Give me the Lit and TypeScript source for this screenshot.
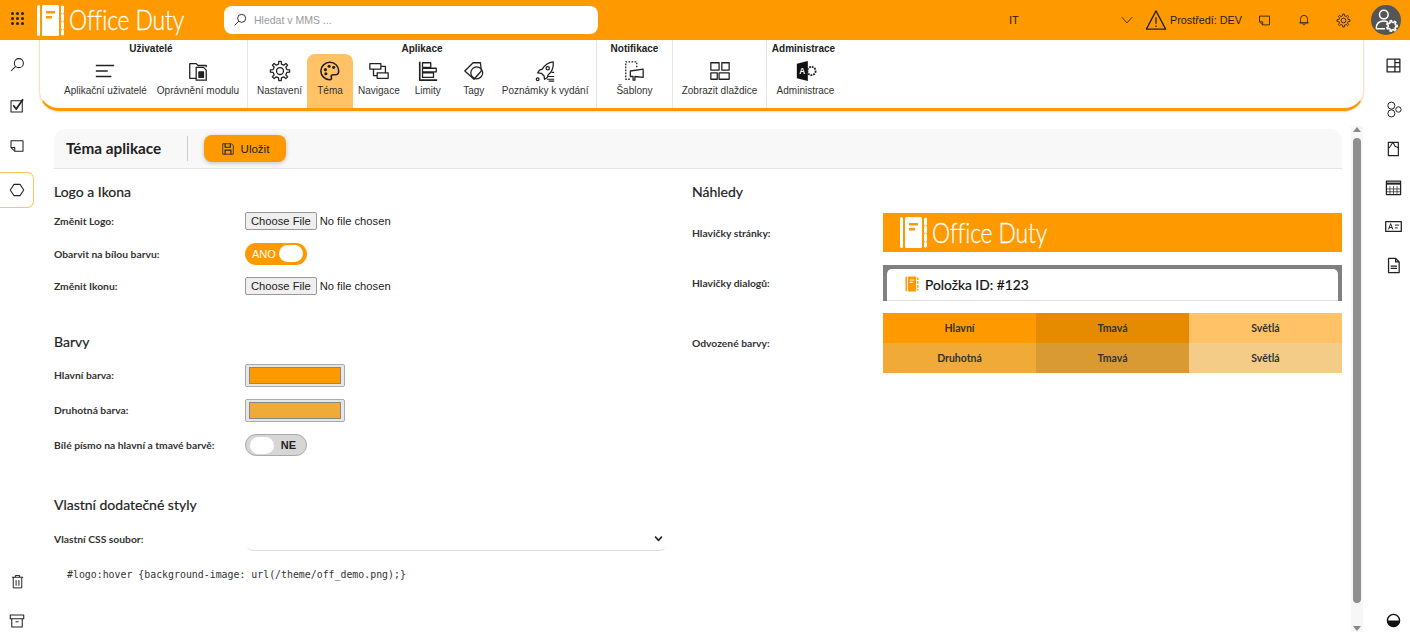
import { LitElement, html, css, svg } from 'lit';
import { customElement } from 'lit/decorators.js';
import { classMap } from 'lit/directives/class-map.js';

/** Ozubené kolo jako obrys, n zubů kolem středu 12,12. */
function gearPath(n: number, ro: number, ri: number): string {
  const step = (Math.PI * 2) / n;
  const pts: string[] = [];
  for (let i = 0; i < n; i++) {
    const a = i * step;
    const w = step * 0.2;
    const p = (r: number, t: number) =>
      `${(12 + r * Math.cos(t)).toFixed(2)} ${(12 + r * Math.sin(t)).toFixed(2)}`;
    pts.push(p(ri, a - w * 1.35), p(ro, a - w * 0.8), p(ro, a + w * 0.8), p(ri, a + w * 1.35));
  }
  return `M${pts.join('L')}Z`;
}

const ICONS: Record<string, unknown> = {
  search: svg`<circle cx="14.5" cy="9.5" r="6"/><path d="M10.2 13.8 4 20"/>`,
  check: svg`<path d="M4 5h15v15H4z"/><path d="M7 11l4 5 9-13" stroke-width="2.4"/>`,
  note: svg`<path d="M4 5h16v14H9l-5-5z"/><path d="M4 14h5v5"/>`,
  hexagon: svg`<path d="M8 4.5h8l5 7.5-5 7.5H8L3 12z"/>`,
  trash: svg`<path d="M4 6h16M9 6V3.500h6V6M6 6v15h12V6M10 10v8M14 10v8"/>`,
  archive: svg`<path d="M3 4h18v5H3zM5 9v11h14V9M10 13h4"/>`,
  lines: svg`<path d="M2 6h20M2 12h13M2 18h17"/>`,
  folderDoc: svg`<path d="M3 20V4h7l2 2h9v2M3 4v16h7"/><path d="M10 8h8l3 3v11H10z"/><path d="M13 13h5v6h-5z" fill="#222"/>`,
  gear: svg`<path d=${gearPath(8, 10.5, 7.6)}/><circle cx="12" cy="12" r="3.800"/>`,
  palette: svg`<path d="M12 2.500c-5.500 0-10 4.200-10 9.500s4.500 9.500 9.500 9.500c2 0 2.500-1.300 2-2.500-.7-1.700.3-3 2-3h2.500c2 0 3.500-1.500 3.500-4 0-5.500-4.500-9.500-9.500-9.500z" stroke-width="1.700"/><g fill="#222" stroke="none"><circle cx="7" cy="10.500" r="1.700"/><circle cx="11" cy="6.800" r="1.700"/><circle cx="16" cy="8" r="1.700"/><circle cx="7.500" cy="15" r="1.700"/></g>`,
  navigation: svg`<path d="M2 4h12v6H2zM10 14h12v6H10zM6 10v7h4M14 7h5v7"/>`,
  limits: svg`<path d="M3 2v20h19" stroke-width="1.800"/><path d="M6 3h9v5H6zM6 9h15v4H6zM6 14h12v5H6z"/>`,
  tags: svg`<path d="M2 12 11 3h8l1 9-8 9z"/><circle cx="15" cy="14" r="6.500"/>`,
  rocket: svg`<path d="M21 2c-5 .5-9 3-12 8l-3 1-2 3 4 .5 3 3 .5 3.500 3-2 1-3c4-3 6-8 5.500-14z"/><circle cx="15" cy="9" r="1.800"/><path d="M14 21h8M15 18h7M16 23h6M19 13.500h3" stroke-width="1.200"/><circle cx="4" cy="21" r="1.500"/>`,
  template: svg`<path d="M15 8V2H3v19h5" stroke-dasharray="1.800 1.500"/><path d="M8 12l14-2v9l-9-1v4h-2v-4H8z"/>`,
  tiles: svg`<path d="M2 3h9v8H2zM14 3h8v8h-8zM2 14h7v7H2zM11 14h11v7H11z"/>`,
  save: svg`<path d="M3 3h15l3 3v15H3z"/><path d="M7 3v6h9V3M7 21v-7h10v7" stroke-width="2"/>`,
  warning: svg`<path d="M12 2 1.500 22h21zM12 9v7M12 18v1.500"/>`,
  chevron: svg`<path d="m3 7 9 10 9-10"/>`,
  bell: svg`<path d="M6 17V10a6 6 0 0 1 12 0v7zM4 17h16M10 20h4"/>`,
  layout: svg`<path d="M3 3h18v18H3zM14 3v18M3 14h18M14 8h7" stroke-width="1.800"/>`,
  nodes: svg`<circle cx="9" cy="6.500" r="5"/><circle cx="9" cy="17.500" r="5"/><circle cx="19" cy="12" r="3.800"/>`,
  page: svg`<path d="M5 2h15v20H5z" stroke-width="1.800"/><path d="M5 11c3-1 4-6 7-9l3 6 5 2" stroke-width="1.600"/>`,
  calendar: svg`<path d="M2 3h20v19H2z" stroke-width="1.800"/><path d="M2 6.500h20" stroke-width="3"/><path d="M7 10v12M12 10v12M17 10v12M2 14h20M2 18h20" stroke-width="1"/>`,
  textbox: svg`<path d="M1 5h22v14H1z" stroke-width="1.800"/><path d="m5 16 3-8 3 8M6 13.500h4M14 10h6M14 14h4"/>`,
  doc: svg`<path d="M5 2h10l5 5v15H5zM15 2v5h5" stroke-width="1.800"/><path d="M8 13h9M8 16h9" stroke-width="1.800"/>`,
};

function icon(name: string, size = 22) {
  return html`<svg class="ic" width=${size} height=${size} viewBox="0 0 24 24">${ICONS[name]}</svg>`;
}

function logo() {
  return html`<div class="logo">
    <svg width="29" height="33" viewBox="0 0 29 33">
      <rect x="0" y="1" width="3" height="31" rx="1.500" fill="#fff" />
      <rect x="5" y="1" width="17" height="31" rx="1.500" fill="#fff" />
      <path d="M9 7h9v2.500H9zM9 12h6v2.500H9z" fill="#ff9900" />
      <path d="M25.500 3v5M25.500 11v5M25.500 19v5M25.500 27v3" stroke="#fff" stroke-width="3" stroke-linecap="round" />
    </svg>
    <span class="logo-text">Office Duty</span>
  </div>`;
}

const RIBBON = [
  { title: 'Uživatelé', cls: 'first', items: [['lines', 'Aplikační uživatelé'], ['folderDoc', 'Oprávnění modulu']] },
  {
    title: 'Aplikace',
    cls: '',
    items: [['gear', 'Nastavení'], ['palette', 'Téma'], ['navigation', 'Navigace'], ['limits', 'Limity'], ['tags', 'Tagy'], ['rocket', 'Poznámky k vydání']],
  },
  { title: 'Notifikace', cls: 'notif', items: [['template', 'Šablony']] },
  { title: '', cls: 'tiles', items: [['tiles', 'Zobrazit dlaždice']] },
  { title: 'Administrace', cls: 'admin', items: [['access', 'Administrace']] },
];

@customElement('app-root')
export class AppRoot extends LitElement {
  static styles = css`
    :host {
      display: block;
      width: 1410px;
      height: 640px;
      overflow: hidden;
      background: #fff;
      font-family: 'Liberation Sans', Arial, sans-serif;
      color: #222;
    }
    .ic {
      fill: none;
      stroke: #222;
      stroke-width: 1.4;
      stroke-linejoin: round;
      flex: none;
      display: block;
    }

    /* horní lišta */
    .topbar {
      height: 40px;
      background: #ff9900;
      display: flex;
      align-items: center;
      font-size: 10.800px;
    }
    .apps {
      display: grid;
      grid-template-columns: repeat(3, 3px);
      gap: 2px;
      margin: 0 13px 3px 11px;
    }
    .apps i {
      width: 3px;
      height: 3px;
      background: #222;
      border-radius: 50%;
    }
    .logo {
      display: flex;
      align-items: center;
      gap: 3px;
      color: #fff;
      width: 147px;
      flex: none;
    }
    .logo svg {
      flex: none;
    }
    .logo-text {
      font-family: Lato, sans-serif;
      font-weight: 300;
      font-size: 27px;
      letter-spacing: -0.2px;
      line-height: 32px;
      white-space: nowrap;
      transform: scaleX(0.85);
      transform-origin: left center;
      -webkit-text-stroke: 0.3px #fff;
    }
    .search {
      width: 374px;
      height: 28px;
      margin-left: 40px;
      margin-bottom: 1px;
      background: #fff;
      border-radius: 8px;
      display: flex;
      align-items: center;
      gap: 6px;
      padding-left: 8px;
      box-sizing: border-box;
      color: #9a9a9a;
      font-size: 10.500px;
    }
    .it {
      margin-left: 411px;
      width: 111px;
      font-size: 11px;
    }
    .warn-gap {
      width: 11px;
    }
    .env {
      margin: 0 15px 0 3px;
      white-space: nowrap;
    }
    .top-ic {
      margin-right: 25px;
    }
    .avatar {
      width: 30px;
      height: 30px;
      border-radius: 50%;
      background: #555;
      display: flex;
      align-items: center;
      justify-content: center;
      margin-left: -5px;
    }
    .avatar .ic {
      stroke: #fff;
    }

    /* tělo stránky */
    .body {
      display: grid;
      grid-template-columns: 39px 1325px 46px;
      height: 600px;
    }
    .rail {
      display: flex;
      flex-direction: column;
      align-items: center;
      height: 600px;
    }
    .rail.left {
      padding-right: 5px;
      padding-top: 5px;
      box-sizing: border-box;
    }
    .rail.right {
      padding: 5px 0 0 12px;
      box-sizing: border-box;
    }
    .rail-item {
      height: 40px;
      flex: none;
      display: flex;
      align-items: center;
      justify-content: center;
    }
    .rail.left .rail-item.second {
      height: 41px;
      padding-top: 1px;
      box-sizing: border-box;
    }
    .rail.right .rail-item {
      height: 39px;
    }
    .rail.right .rail-item.first {
      height: 45px;
      padding-bottom: 5px;
      box-sizing: border-box;
    }
    .rail-item.active {
      width: 37px;
      height: 36px;
      margin: 6px 0 0 -3px;
      padding-left: 3px;
      box-sizing: border-box;
      border: 1px solid #ffc266;
      border-left: none;
      border-radius: 0 7px 7px 0;
    }
    .rail-bottom {
      margin-top: auto;
    }
    .rail-last {
      margin-bottom: -1px;
    }

    /* ribbon */
    .ribbon {
      height: 71px;
      box-sizing: border-box;
      border: 1px solid #fde3b8;
      border-top: none;
      border-bottom: 3px solid #ff9900;
      border-radius: 0 0 20px 20px;
      box-shadow: 0 1px 2px rgba(0, 0, 0, 0.12);
      display: flex;
    }
    .group {
      display: flex;
      flex-direction: column;
      padding-top: 3px;
      border-right: 1px solid #e6e6e6;
      box-sizing: border-box;
    }
    .group-title {
      height: 11px;
      line-height: 11px;
      font-size: 10px;
      font-weight: 700;
      text-align: center;
      white-space: nowrap;
    }
    .group.first .group-title {
      padding-left: 15px;
    }
    .group.admin .group-title {
      padding-right: 4px;
    }
    .group-items {
      display: flex;
      flex: 1;
      justify-content: center;
    }
    .group.first {
      width: 208px;
    }
    .group.first .group-items {
      justify-content: flex-start;
      padding-left: 19px;
    }
    .group.apps-g {
      width: 349px;
    }
    .group.apps-g .group-items {
      justify-content: flex-start;
      padding-left: 4px;
    }
    .group.notif {
      width: 76px;
    }
    .group.tiles {
      width: 94px;
    }
    .group.admin {
      width: 77px;
      border-right: none;
    }
    .item {
      min-width: 46px;
      padding: 6px 5px 0;
      box-sizing: border-box;
      display: flex;
      flex-direction: column;
      align-items: center;
      font-size: 10px;
      color: #333;
      white-space: nowrap;
      gap: 3px;
    }
    .item.active {
      background: #ffc266;
      border-radius: 8px 8px 0 0;
    }
    .access {
      width: 22px;
      height: 22px;
      flex: none;
    }
    .access text {
      font: 700 9px 'Liberation Sans', sans-serif;
      fill: #fff;
    }

    /* obsah */
    .content {
      display: flex;
      padding: 18px 0 0 15px;
      height: 529px;
    }
    .page {
      width: 1288px;
    }
    .scroll {
      width: 12px;
      margin-left: 9px;
      height: 506px;
      background: #f7f7f7;
      display: flex;
      flex-direction: column;
      align-items: center;
      margin-top: -3px;
      padding: 1px 0;
      box-sizing: border-box;
    }
    .arrow-up,
    .arrow-down {
      width: 0;
      height: 0;
      flex: none;
      border-left: 4px solid transparent;
      border-right: 4px solid transparent;
    }
    .arrow-up {
      border-bottom: 5px solid #888;
    }
    .arrow-down {
      border-top: 5px solid #888;
      margin-top: auto;
    }
    .thumb {
      width: 8px;
      height: 465px;
      margin-top: 6px;
      background: #8f8f8f;
      border-radius: 4px;
      flex: none;
    }
    .page-head {
      height: 40px;
      box-sizing: border-box;
      background: #f8f8f8;
      border-bottom: 1px solid #e4e4e4;
      border-radius: 12px 12px 0 0;
      display: flex;
      align-items: center;
      padding-left: 12px;
    }
    .page-title {
      font-family: Lato, sans-serif;
      font-weight: 700;
      font-size: 15.300px;
      width: 121px;
      margin-bottom: 1px;
    }
    .page-sep {
      width: 1px;
      height: 25px;
      background: #ccc;
    }
    .btn {
      width: 82px;
      height: 27px;
      margin: 0 0 0 16px;
      background: #ff9900;
      border: none;
      border-radius: 8px;
      box-shadow: 0 1px 4px rgba(0, 0, 0, 0.25);
      display: flex;
      align-items: center;
      justify-content: center;
      gap: 6px;
      font: 11.500px 'Liberation Sans', sans-serif;
      color: #222;
      padding: 0;
    }
    .cols {
      display: grid;
      grid-template-columns: 612px 650px;
      column-gap: 26px;
    }
    h3 {
      margin: 0;
      font-family: Lato, sans-serif;
      font-weight: 400;
      font-size: 14px;
      line-height: 20px;
      height: 20px;
      color: #222;
      -webkit-text-stroke: 0.2px #222;
    }
    .s1 {
      margin-top: 13px;
    }
    .s2 {
      margin-top: 29.500px;
    }
    .s3 {
      margin-top: 32.500px;
    }
    .row {
      display: grid;
      grid-template-columns: 191px 1fr;
      align-items: center;
      height: 32.500px;
      font-family: Lato, sans-serif;
      font-size: 10.300px;
      font-weight: 700;
      color: #333;
      white-space: nowrap;
    }
    .s1 h3 {
      margin-bottom: 3px;
    }
    .s2 h3 {
      margin-bottom: 5.500px;
    }
    .s2 .row {
      height: 35px;
    }
    .s3 h3 {
      margin-bottom: 12px;
    }
    .s3 .row {
      height: 24px;
    }
    input[type='file'] {
      font: 11.200px 'Liberation Sans', sans-serif;
      color: #222;
    }
    input[type='file']::file-selector-button {
      height: 18px;
      padding: 0 5px;
      margin-right: 3px;
      border: 1px solid #999;
      border-radius: 2px;
      background: #efefef;
      color: #222;
    }
    .toggle {
      width: 62px;
      height: 22px;
      box-sizing: border-box;
      border-radius: 11px;
      display: flex;
      align-items: center;
      justify-content: space-between;
      padding: 0 4px 0 7px;
      font: 11px 'Liberation Sans', sans-serif;
    }
    .toggle.on {
      background: #ff9900;
      color: #fff;
    }
    .toggle.off {
      background: #d6d6d6;
      border: 1px solid #aaa;
      padding: 0 10px 0 4px;
      font-weight: 700;
      color: #222;
    }
    .knob {
      width: 24px;
      height: 17px;
      border-radius: 9px;
      background: #fff;
    }
    input[type='color'] {
      width: 100px;
      height: 23px;
      padding: 2px 3px;
      box-sizing: border-box;
      background: #e6e6e6;
      border: 1px solid #aaa;
      border-radius: 2px;
      display: block;
    }
    input[type='color']::-webkit-color-swatch-wrapper {
      padding: 0;
    }
    input[type='color']::-webkit-color-swatch {
      border: 1px solid #888;
      border-radius: 0;
    }
    select {
      width: 419px;
      height: 24px;
      margin-left: 2px;
      appearance: none;
      background: transparent;
      border: none;
      border-bottom: 1px solid #ddd;
      border-radius: 0 0 6px 6px;
      display: block;
    }
    .select-wrap {
      position: relative;
    }
    .select-wrap .ic {
      position: absolute;
      right: 3px;
      top: 7px;
      stroke-width: 4;
    }
    .code {
      margin: 12px 0 0 13px;
      font: 9.900px/24px 'DejaVu Sans Mono', monospace;
      color: #333;
      white-space: pre;
    }

    /* náhledy */
    .preview-grid {
      display: grid;
      grid-template-columns: 191px 459px;
      row-gap: 12.500px;
      align-items: center;
      margin-top: 11px;
      font-family: Lato, sans-serif;
      font-size: 10.300px;
      font-weight: 700;
      color: #333;
    }
    .strip {
      height: 39px;
      background: #ff9900;
      display: flex;
      align-items: center;
      padding-left: 17px;
      box-sizing: border-box;
    }
    .dialog {
      height: 36px;
      background: #808080;
      padding: 4px 4px 0;
      box-sizing: border-box;
    }
    .dialog-inner {
      height: 32px;
      background: #fff;
      border-radius: 5px 5px 0 0;
      border-bottom: 1px solid #ddd;
      box-sizing: border-box;
      display: flex;
      align-items: center;
      gap: 4px;
      padding-left: 17px;
      font-size: 13.800px;
      font-weight: 400;
      color: #111;
      -webkit-text-stroke: 0.2px #111;
    }
    .swatches {
      display: grid;
      grid-template-columns: repeat(3, 1fr);
      grid-auto-rows: 30px;
      font-size: 10.500px;
      text-align: center;
      line-height: 30px;
    }
  `;

  private renderRibbonIcon(name: string) {
    if (name === 'access') {
      return html`<svg class="access" viewBox="0 0 24 24">
        <path d="M2 4 14 1v22L2 20z" fill="#111" />
        <text x="4.500" y="15.500">A</text>
        <circle cx="18" cy="12" r="4.500" fill="none" stroke="#222" stroke-width="2" stroke-dasharray="2 1" />
      </svg>`;
    }
    return icon(name);
  }

  private renderRibbon() {
    return html`<div class="ribbon">
      ${RIBBON.map(
        (g) => html`<div class="group ${g.cls || 'apps-g'}">
          <div class="group-title">${g.title}</div>
          <div class="group-items">
            ${g.items.map(
              ([ic, label]) => html`<div class=${classMap({ item: true, active: label === 'Téma' })}>
                ${this.renderRibbonIcon(ic)}<span>${label}</span>
              </div>`,
            )}
          </div>
        </div>`,
      )}
    </div>`;
  }

  render() {
    return html`
      <div class="topbar">
        <div class="apps">${Array.from({ length: 9 }, () => html`<i></i>`)}</div>
        ${logo()}
        <div class="search">${icon('search', 16)}<span>Hledat v MMS ...</span></div>
        <div class="it">IT</div>
        ${icon('chevron', 14)}
        <span class="warn-gap"></span>
        ${icon('warning', 22)}
        <span class="env">Prostředí: DEV</span>
        <span class="top-ic">${icon('note', 15)}</span>
        <span class="top-ic">${icon('bell', 14)}</span>
        <span class="top-ic">${icon('gear', 15)}</span>
        <div class="avatar">
          <svg class="ic" width="26" height="26" viewBox="0 0 24 24">
            <circle cx="10" cy="7" r="4" />
            <path d="M3 20c0-5 3-7 7-7 1.500 0 2.500.3 3.500 1M3 20h8" />
            <path d=${gearPath(7, 5, 3.500)} transform="translate(5.500 5.500)" />
          </svg>
        </div>
      </div>

      <div class="body">
        <div class="rail left">
          <div class="rail-item">${icon('search', 18)}</div>
          <div class="rail-item second">${icon('check', 18)}</div>
          <div class="rail-item">${icon('note', 18)}</div>
          <div class="rail-item active">${icon('hexagon', 18)}</div>
          <div class="rail-item rail-bottom">${icon('trash', 17)}</div>
          <div class="rail-item rail-last">${icon('archive', 18)}</div>
        </div>

        <div>
          ${this.renderRibbon()}
          <div class="content">
            <div class="page">
              <div class="page-head">
                <div class="page-title">Téma aplikace</div>
                <div class="page-sep"></div>
                <button class="btn">${icon('save', 14)}Uložit</button>
              </div>
              <div class="cols">
                <div>
                  <section class="s1">
                    <h3>Logo a Ikona</h3>
                    <div class="row"><span>Změnit Logo:</span><input type="file" /></div>
                    <div class="row">
                      <span>Obarvit na bílou barvu:</span>
                      <div class="toggle on">ANO<span class="knob"></span></div>
                    </div>
                    <div class="row"><span>Změnit Ikonu:</span><input type="file" /></div>
                  </section>
                  <section class="s2">
                    <h3>Barvy</h3>
                    <div class="row"><span>Hlavní barva:</span><input type="color" value="#ff9900" /></div>
                    <div class="row"><span>Druhotná barva:</span><input type="color" value="#f0aa37" /></div>
                    <div class="row">
                      <span>Bílé písmo na hlavní a tmavé barvě:</span>
                      <div class="toggle off"><span class="knob"></span>NE</div>
                    </div>
                  </section>
                  <section class="s3">
                    <h3>Vlastní dodatečné styly</h3>
                    <div class="row">
                      <span>Vlastní CSS soubor:</span>
                      <div class="select-wrap"><select></select>${icon('chevron', 9)}</div>
                    </div>
                    <div class="code">#logo:hover {background-image: url(/theme/off_demo.png);}</div>
                  </section>
                </div>
                <section class="s1">
                  <h3>Náhledy</h3>
                  <div class="preview-grid">
                    <span>Hlavičky stránky:</span>
                    <div class="strip">${logo()}</div>
                    <span>Hlavičky dialogů:</span>
                    <div class="dialog">
                      <div class="dialog-inner">
                        <svg width="17" height="16" viewBox="0 0 29 33">
                          <rect x="0" y="1" width="3" height="31" rx="1.500" fill="#ff9900" />
                          <rect x="5" y="1" width="17" height="31" rx="1.500" fill="#ff9900" />
                          <path d="M9 7h9v2.500H9zM9 12h6v2.500H9z" fill="#fff" />
                          <path d="M25.500 3v5M25.500 11v5M25.500 19v5M25.500 27v3" stroke="#ff9900" stroke-width="3" />
                        </svg>
                        <span>Položka ID: #123</span>
                      </div>
                    </div>
                    <span>Odvozené barvy:</span>
                    <div class="swatches">
                      <div style="background:#ff9900">Hlavní</div>
                      <div style="background:#e68a00">Tmavá</div>
                      <div style="background:#ffc266">Světlá</div>
                      <div style="background:#f0aa37">Druhotná</div>
                      <div style="background:#d99a33">Tmavá</div>
                      <div style="background:#f5cc87">Světlá</div>
                    </div>
                  </div>
                </section>
              </div>
            </div>
            <div class="scroll">
              <div class="arrow-up"></div>
              <div class="thumb"></div>
              <div class="arrow-down"></div>
            </div>
          </div>
        </div>

        <div class="rail right">
          <div class="rail-item first">${icon('layout', 17)}</div>
          <div class="rail-item">${icon('nodes', 17)}</div>
          <div class="rail-item">${icon('page', 16)}</div>
          <div class="rail-item">${icon('calendar', 17)}</div>
          <div class="rail-item">${icon('textbox', 17)}</div>
          <div class="rail-item">${icon('doc', 17)}</div>
          <div class="rail-item rail-bottom">
            <svg width="15" height="15" viewBox="0 0 16 16">
              <circle cx="8" cy="8" r="6.500" fill="#fff" stroke="#111" stroke-width="1.500" />
              <path d="M1.500 8a6.500 6.500 0 0 0 13 0z" fill="#111" />
            </svg>
          </div>
        </div>
      </div>
    `;
  }
}
